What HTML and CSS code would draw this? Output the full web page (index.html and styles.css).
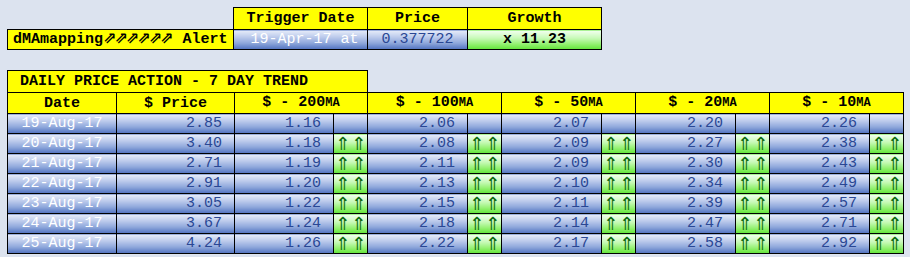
FILE: index.html
```html
<!DOCTYPE html>
<html>
<head>
<meta charset="utf-8">
<link rel="stylesheet" href="styles.css">
</head>
<body>
<table class="alert">
  <colgroup><col class="c-alert"><col class="c-trig"><col class="c-price"><col class="c-growth"></colgroup>
  <tr class="hrow">
    <td class="blank"></td>
    <th>Trigger Date</th>
    <th>Price</th>
    <th>Growth</th>
  </tr>
  <tr class="drow">
    <td class="name">dMAmapping<span class="nea">⇗⇗⇗⇗⇗⇗</span> Alert</td>
    <td class="blue date trig">19-Apr-17 at</td>
    <td class="blue val center">0.377722</td>
    <td class="green growth">x 11.23</td>
  </tr>
</table>

<table class="trend">
  <colgroup>
    <col class="c-date"><col class="c-px">
    <col class="c-v"><col class="c-a">
    <col class="c-v2"><col class="c-a">
    <col class="c-v2"><col class="c-a">
    <col class="c-v2"><col class="c-a">
    <col class="c-v2"><col class="c-a">
  </colgroup>
  <tr class="trow">
    <td class="title" colspan="4">DAILY PRICE ACTION - 7 DAY TREND</td>
    <td class="blank" colspan="8"></td>
  </tr>
  <tr class="hrow">
    <th>Date</th>
    <th>$ Price</th>
    <th colspan="2">$ - 200<span class="ma">MA</span></th>
    <th colspan="2">$ - 100<span class="ma">MA</span></th>
    <th colspan="2">$ - 50<span class="ma">MA</span></th>
    <th colspan="2">$ - 20<span class="ma">MA</span></th>
    <th colspan="2">$ - 10<span class="ma">MA</span></th>
  </tr>
  <tr class="drow">
    <td class="blue date">19-Aug-17</td><td class="blue val">2.85</td>
    <td class="blue val">1.16</td><td class="blue"></td>
    <td class="blue val">2.06</td><td class="blue"></td>
    <td class="blue val">2.07</td><td class="blue"></td>
    <td class="blue val">2.20</td><td class="blue"></td>
    <td class="blue val">2.26</td><td class="blue"></td>
  </tr>
  <tr class="drow">
    <td class="blue date">20-Aug-17</td><td class="blue val">3.40</td>
    <td class="blue val">1.18</td><td class="green up">⇑ ⇑</td>
    <td class="blue val">2.08</td><td class="green up">⇑ ⇑</td>
    <td class="blue val">2.09</td><td class="green up">⇑ ⇑</td>
    <td class="blue val">2.27</td><td class="green up">⇑ ⇑</td>
    <td class="blue val">2.38</td><td class="green up">⇑ ⇑</td>
  </tr>
  <tr class="drow">
    <td class="blue date">21-Aug-17</td><td class="blue val">2.71</td>
    <td class="blue val">1.19</td><td class="green up">⇑ ⇑</td>
    <td class="blue val">2.11</td><td class="green up">⇑ ⇑</td>
    <td class="blue val">2.09</td><td class="green up">⇑ ⇑</td>
    <td class="blue val">2.30</td><td class="green up">⇑ ⇑</td>
    <td class="blue val">2.43</td><td class="green up">⇑ ⇑</td>
  </tr>
  <tr class="drow">
    <td class="blue date">22-Aug-17</td><td class="blue val">2.91</td>
    <td class="blue val">1.20</td><td class="green up">⇑ ⇑</td>
    <td class="blue val">2.13</td><td class="green up">⇑ ⇑</td>
    <td class="blue val">2.10</td><td class="green up">⇑ ⇑</td>
    <td class="blue val">2.34</td><td class="green up">⇑ ⇑</td>
    <td class="blue val">2.49</td><td class="green up">⇑ ⇑</td>
  </tr>
  <tr class="drow">
    <td class="blue date">23-Aug-17</td><td class="blue val">3.05</td>
    <td class="blue val">1.22</td><td class="green up">⇑ ⇑</td>
    <td class="blue val">2.15</td><td class="green up">⇑ ⇑</td>
    <td class="blue val">2.11</td><td class="green up">⇑ ⇑</td>
    <td class="blue val">2.39</td><td class="green up">⇑ ⇑</td>
    <td class="blue val">2.57</td><td class="green up">⇑ ⇑</td>
  </tr>
  <tr class="drow">
    <td class="blue date">24-Aug-17</td><td class="blue val">3.67</td>
    <td class="blue val">1.24</td><td class="green up">⇑ ⇑</td>
    <td class="blue val">2.18</td><td class="green up">⇑ ⇑</td>
    <td class="blue val">2.14</td><td class="green up">⇑ ⇑</td>
    <td class="blue val">2.47</td><td class="green up">⇑ ⇑</td>
    <td class="blue val">2.71</td><td class="green up">⇑ ⇑</td>
  </tr>
  <tr class="drow">
    <td class="blue date">25-Aug-17</td><td class="blue val">4.24</td>
    <td class="blue val">1.26</td><td class="green up">⇑ ⇑</td>
    <td class="blue val">2.22</td><td class="green up">⇑ ⇑</td>
    <td class="blue val">2.17</td><td class="green up">⇑ ⇑</td>
    <td class="blue val">2.58</td><td class="green up">⇑ ⇑</td>
    <td class="blue val">2.92</td><td class="green up">⇑ ⇑</td>
  </tr>
</table>
</body>
</html>
```

FILE: styles.css
```css
html, body {
  margin: 0;
  padding: 0;
  background: #dce3ef;
}
body {
  padding: 7px;
  font-family: "Liberation Mono", "Courier New", "DejaVu Sans Mono", monospace;
  font-size: 15px;
  color: #000;
}
table {
  border-collapse: collapse;
  table-layout: fixed;
}
td, th {
  border: 1px solid #000;
  padding: 0;
  white-space: nowrap;
  overflow: hidden;
  line-height: 17px;
}
th {
  background: #ffff00;
  font-weight: bold;
  text-align: center;
}
td.blank {
  border: none;
  background: transparent;
}
.alert { width: 595px; }
.c-alert { width: 226px; }
.c-trig { width: 134px; }
.c-price { width: 100px; }
.c-growth { width: 134px; }
.alert .hrow th { height: 21px; }
.alert .drow td { height: 19px; }

.name {
  background: #ffff00;
  font-weight: bold;
  padding-left: 5px;
  text-align: left;
}
.nea {
  font-family: "DejaVu Sans", sans-serif;
  font-size: 16px;
  line-height: 10px;
  letter-spacing: -2px;
  margin-right: 2px;
  font-weight: bold;
}

.blue {
  background: linear-gradient(to bottom, #e6ecf9 0%, #c2cfee 30%, #91a9dc 65%, #5072c0 100%);
  color: #2a4794;
  font-weight: normal;
}
.green {
  background: linear-gradient(to bottom, #f2fff0 0%, #c8fab8 40%, #8ef06a 75%, #62e43a 100%);
}
.date {
  color: #ffffff;
  text-align: center;
}
.trig {
  padding-left: 8px;
}
.val {
  text-align: right;
  padding-right: 12px;
}
.center {
  text-align: center;
  padding-right: 0;
}
.growth {
  font-weight: bold;
  text-align: center;
}
.up {
  color: #0b6b0b;
  text-align: center;
  font-size: 18px;
  line-height: 12px;
  word-spacing: -5px;
  font-family: "DejaVu Sans", sans-serif;
}

.trend {
  margin-top: 20px;
  width: 897px;
}
.c-date { width: 109px; }
.c-px { width: 118px; }
.c-v { width: 99px; }
.c-v2 { width: 100px; }
.c-a { width: 34px; }
.trend .trow td { height: 21px; }
.trend .hrow th { height: 20px; }
.trend .drow td { height: 19px; }
.title {
  background: #ffff00;
  font-weight: bold;
  text-align: left;
  padding-left: 12px;
}
.ma {
  font-size: 12px;
}
```
